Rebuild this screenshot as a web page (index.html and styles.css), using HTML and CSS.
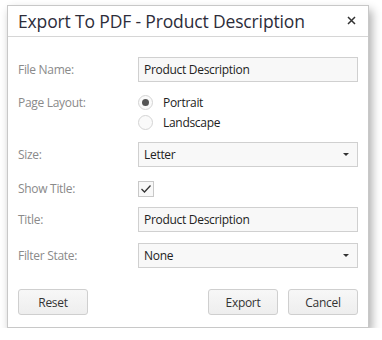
FILE: index.html
```html
<!DOCTYPE html>
<html lang="en">
<head>
    <meta charset="UTF-8">
    <meta name="viewport" content="width=device-width, initial-scale=1.0">
    <title>Export To PDF</title>
    <link rel="stylesheet" href="styles.css">
</head>
<body>

<div class="dialog">
    <div class="dialogHeader">
        <div class="dialogTitle">Export To PDF - Product Description</div>
        <div class="closeBtn">
            <svg width="9" height="9" viewBox="0 0 9 9"><path d="M1 1 L8 8 M8 1 L1 8" stroke="#333" stroke-width="1.5"/></svg>
        </div>
    </div>
    <div class="dialogBody">
        <div class="formRow">
            <div class="fieldLabel">File Name:</div>
            <div class="textBox">Product Description</div>
        </div>
        <div class="formRow radioRow">
            <div class="fieldLabel">Page Layout:</div>
            <div class="radioList">
                <div class="radioItem"><span class="radio checked"></span>Portrait</div>
                <div class="radioItem"><span class="radio"></span>Landscape</div>
            </div>
        </div>
        <div class="formRow">
            <div class="fieldLabel">Size:</div>
            <div class="textBox comboBox">Letter<span class="dropArrow"></span></div>
        </div>
        <div class="formRow checkRow">
            <div class="fieldLabel">Show Title:</div>
            <div class="checkBox">
                <svg width="12" height="10" viewBox="0 0 12 10"><path d="M1.5 5 L4.5 8 L10.5 1.5" fill="none" stroke="#333" stroke-width="1.3"/></svg>
            </div>
        </div>
        <div class="formRow">
            <div class="fieldLabel">Title:</div>
            <div class="textBox">Product Description</div>
        </div>
        <div class="formRow filterRow">
            <div class="fieldLabel">Filter State:</div>
            <div class="textBox comboBox">None<span class="dropArrow"></span></div>
        </div>
    </div>
    <div class="dialogFooter">
        <button class="dlgBtn">Reset</button>
        <div class="footerRight">
            <button class="dlgBtn">Export</button>
            <button class="dlgBtn">Cancel</button>
        </div>
    </div>
</div>

</body>
</html>
```

FILE: styles.css
```css
body {
    margin: 0;
    background: #fff;
    font-family: "Open Sans", "Noto Sans", sans-serif;
    font-size: 12px;
    letter-spacing: -0.3px;
    color: #333;
}
.dialog {
    margin: 5px 0 0 7px;
    width: 360px;
    border: 1px solid #c8c8c8;
    background: #fff;
    box-shadow: 3px 5px 9px rgba(0, 0, 0, 0.32);
}
.dialogHeader {
    display: flex;
    align-items: center;
    justify-content: space-between;
    height: 30px;
    padding: 0 12px 0 10px;
    border-bottom: 1px solid #d6d6d6;
}
.dialogTitle {
    font-size: 17.5px;
    color: #2d2d3a;
    letter-spacing: -0.15px;
}
.closeBtn {
    display: flex;
    margin-top: -2px;
}
.dialogBody {
    display: flex;
    flex-direction: column;
    gap: 10px;
    padding: 20px 10px 0 10px;
}
.formRow {
    display: flex;
    align-items: center;
}
.fieldLabel {
    width: 120px;
    flex-shrink: 0;
    color: #8a8a8a;
}
.textBox {
    flex: 1;
    height: 23px;
    line-height: 23px;
    padding: 0 5px;
    border: 1px solid #d0d0d0;
    background: #f8f8f8;
    color: #222;
}
.comboBox {
    display: flex;
    justify-content: space-between;
    align-items: center;
}
.dropArrow {
    width: 0;
    height: 0;
    margin-right: 3px;
    border-left: 3px solid transparent;
    border-right: 3px solid transparent;
    border-top: 3px solid #333;
}
.radioRow {
    align-items: flex-start;
}
.radioRow .fieldLabel {
    margin-top: 2px;
}
.radioList {
    display: flex;
    flex-direction: column;
}
.radioItem {
    display: flex;
    align-items: center;
    height: 20px;
    color: #222;
}
.radio {
    box-sizing: border-box;
    width: 15px;
    height: 15px;
    margin-right: 10px;
    border: 1px solid #d4d4d4;
    border-radius: 50%;
    background: #fafafa;
    position: relative;
}
.radio.checked::after {
    content: "";
    position: absolute;
    left: 3px;
    top: 3px;
    width: 7px;
    height: 7px;
    border-radius: 50%;
    background: #555;
}
.checkRow {
    margin-top: 3px;
}
.checkBox {
    box-sizing: border-box;
    width: 16px;
    height: 16px;
    border: 1px solid #c8c8c8;
    background: #f8f8f8;
    display: flex;
    align-items: center;
    justify-content: center;
}
.filterRow {
    margin-top: 1px;
}
.dialogFooter {
    display: flex;
    justify-content: space-between;
    padding: 21px 10px 12px 10px;
}
.footerRight {
    display: flex;
    gap: 10px;
}
.dlgBtn {
    width: 70px;
    height: 26px;
    padding: 0;
    font-family: "Open Sans", "Noto Sans", sans-serif;
    font-size: 12px;
    letter-spacing: -0.3px;
    color: #333;
    background: linear-gradient(#f7f7f7, #eeeeee);
    border: 1px solid #cfcfcf;
    border-radius: 3px;
}
```
